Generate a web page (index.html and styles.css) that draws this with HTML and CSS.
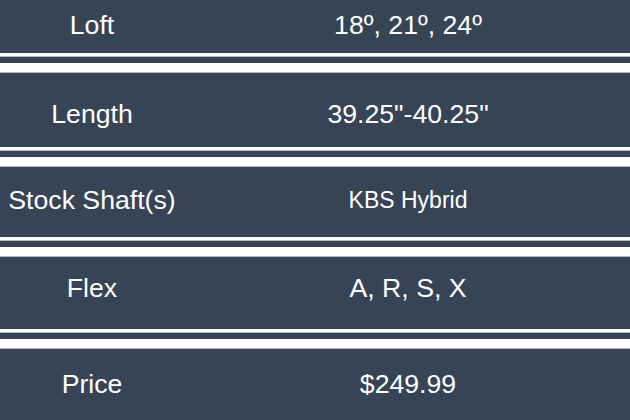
FILE: index.html
```html
<!DOCTYPE html>
<html>
<head>
<meta charset="utf-8">
<link rel="stylesheet" href="styles.css">
</head>
<body>
<div class="specs">
  <div class="row row-1"><div class="label">Loft</div><div class="value">18º, 21º, 24º</div></div>
  <div class="sep"></div>
  <div class="row row-2"><div class="label">Length</div><div class="value">39.25"-40.25"</div></div>
  <div class="sep"></div>
  <div class="row row-3"><div class="label">Stock Shaft(s)</div><div class="value small">KBS Hybrid</div></div>
  <div class="sep"></div>
  <div class="row row-4"><div class="label">Flex</div><div class="value">A, R, S, X</div></div>
  <div class="sep"></div>
  <div class="row row-5"><div class="label">Price</div><div class="value">$249.99</div></div>
</div>
</body>
</html>
```
FILE: styles.css
```css
* { box-sizing: border-box; }
html, body { margin: 0; padding: 0; }
body {
  width: 630px;
  height: 420px;
  overflow: hidden;
  background: #374455;
  font-family: "Liberation Sans", Arial, sans-serif;
  color: #ffffff;
}
.specs { display: flex; flex-direction: column; }
.row {
  display: grid;
  grid-template-columns: 184px 1fr;
  align-items: center;
  background: #374455;
  font-size: 26.67px;
}
.label, .value { text-align: center; white-space: nowrap; }
.value { padding-left: 2px; }
.value.small { font-size: 23px; }
.row-1 { height: 53px; padding-bottom: 2px; }
.row-2 { height: 74px; padding-top: 8px; }
.row-3 { height: 70px; padding-bottom: 4px; }
.row-4 { height: 72px; padding-bottom: 10px; }
.row-5 { height: 71px; }
.sep {
  height: 20px;
  flex: none;
  background: linear-gradient(to bottom,
    #ffffff 0, #ffffff 3px,
    #b4bac2 3px, #b4bac2 4px,
    #374455 4px, #374455 10px,
    #ffffff 10px, #ffffff 19px,
    #b4bac2 19px, #b4bac2 20px);
}
```
